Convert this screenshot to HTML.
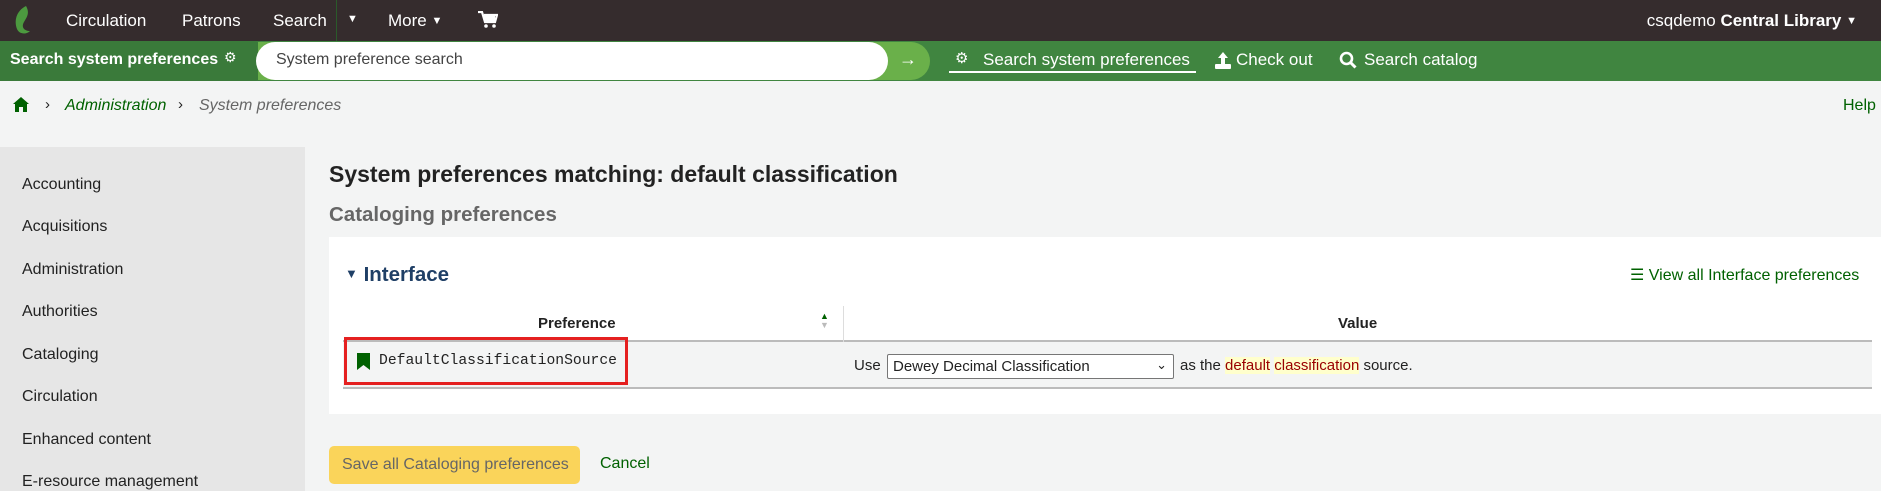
<!DOCTYPE html>
<html><head><meta charset="utf-8"><style>
*{margin:0;padding:0;box-sizing:border-box}
body{width:1881px;height:491px;overflow:hidden;background:#f3f4f4;font-family:"Liberation Sans",sans-serif;font-size:16px;color:#222;position:relative}
.a{position:absolute;white-space:nowrap}
#top{left:0;top:0;width:1881px;height:41px;background:#352c2d}
#top .a{color:#fff;font-size:17px;top:11px}
#gbar{left:0;top:41px;width:1881px;height:40px;background:#408540}
#gbar .a{color:#fff;font-size:17px}
.side{left:0;top:147px;width:305px;height:344px;background:#e6e6e6}
.side div{position:absolute;left:22px;font-size:16px;color:#222}
.hl{background:#ffffcc;color:#990000}
</style></head><body>
<div class="a" id="top">
 <svg class="a" style="left:12px;top:5px" width="22" height="30" viewBox="0 0 22 30"><path d="M14 1 C4 6 2 16 5 24 C7 29 14 30 18 26 C12 26 9 22 12 17 C15 12 18 8 14 1Z" fill="#4c9a3f"/></svg>
 <div class="a" style="left:66px">Circulation</div>
 <div class="a" style="left:182px">Patrons</div>
 <div class="a" style="left:273px">Search</div>
 <div class="a" style="left:336px;top:0;width:1px;height:41px;background:#2a5a2a"></div>
 <div class="a" style="left:347px;top:13px;font-size:11px">▼</div>
 <div class="a" style="left:388px">More <span style="font-size:11px;vertical-align:2px">▼</span></div>
 <svg class="a" style="left:478px;top:11px" width="20" height="18" viewBox="0 0 20 18"><path d="M0 1h4l3 10h10l2-7H6" fill="none" stroke="#fff" stroke-width="2.2"/><rect x="6" y="5" width="11" height="5" fill="#fff"/><circle cx="8" cy="15" r="1.8" fill="#fff"/><circle cx="16" cy="15" r="1.8" fill="#fff"/></svg>
 <div class="a" style="right:24px;left:auto">csqdemo <b>Central Library</b> <span style="font-size:11px;vertical-align:2px">▼</span></div>
</div>
<div class="a" id="gbar">
 <div class="a" style="left:0;top:0;width:275px;height:40px;background:#3a7a3a;border-radius:0 20px 20px 0"></div>
 <div class="a" style="left:10px;top:10px;font-weight:bold;font-size:16px">Search system preferences</div>
 <div class="a" style="left:224px;top:8px;font-size:14px">⚙</div>
 <div class="a" style="left:258px;top:1px;width:672px;height:38px;background:#6ab04a;border-radius:0 20px 20px 0"></div>
 <div class="a" style="left:256px;top:1px;width:632px;height:38px;background:#fff;border-radius:19px"></div>
 <div class="a" style="left:276px;top:10px;color:#444;font-size:16px">System preference search</div>
 <div class="a" style="left:899px;top:8px;font-size:18px;font-weight:bold">→</div>
 <div class="a" style="left:955px;top:8px;font-size:15px">⚙</div>
 <div class="a" style="left:983px;top:9px">Search system preferences</div>
 <div class="a" style="left:949px;top:30px;width:247px;height:2px;background:#fff"></div>
 <svg class="a" style="left:1214px;top:10px" width="18" height="19" viewBox="0 0 18 19"><path d="M9 1l-5 6h3v6h4V7h3z" fill="#fff"/><rect x="1" y="13" width="16" height="5" rx="1" fill="#fff"/></svg>
 <div class="a" style="left:1236px;top:9px">Check out</div>
 <svg class="a" style="left:1339px;top:10px" width="18" height="19" viewBox="0 0 18 19"><circle cx="7.5" cy="7.5" r="5.5" fill="none" stroke="#fff" stroke-width="2.6"/><path d="M11.5 11.5l5 5" stroke="#fff" stroke-width="3"/></svg>
 <div class="a" style="left:1364px;top:9px">Search catalog</div>
</div>
<svg class="a" style="left:13px;top:97px" width="16" height="15" viewBox="0 0 16 15"><path d="M8 0L0 7h2v8h4v-5h4v5h4V7h2z" fill="#006100"/></svg>
<div class="a" style="left:45px;top:96px;font-size:15px">›</div>
<div class="a" style="left:65px;top:97px;font-style:italic;color:#006100;font-size:16px">Administration</div>
<div class="a" style="left:178px;top:96px;font-size:15px">›</div>
<div class="a" style="left:199px;top:97px;font-style:italic;color:#666;font-size:16px">System preferences</div>
<div class="a" style="left:1843px;top:97px;color:#006100;font-size:16px">Help</div>
<div class="a side">
 <div style="top:29px">Accounting</div><div style="top:71px">Acquisitions</div><div style="top:114px">Administration</div><div style="top:156px">Authorities</div><div style="top:199px">Cataloging</div><div style="top:241px">Circulation</div><div style="top:284px">Enhanced content</div><div style="top:326px">E-resource management</div>
</div>
<div class="a" style="left:329px;top:161px;font-size:23px;font-weight:bold;color:#222">System preferences matching: default classification</div>
<div class="a" style="left:329px;top:203px;font-size:20.5px;font-weight:bold;color:#666">Cataloging preferences</div>
<div class="a" style="left:329px;top:237px;width:1552px;height:177px;background:#fff"></div>
<div class="a" style="left:345px;top:263px;font-size:20.5px;font-weight:bold;color:#1f3f66"><span style="font-size:13px;vertical-align:3px">▼</span> Interface</div>
<div class="a" style="left:1630px;top:265px;color:#006100;font-size:16px">☰ View all Interface preferences</div>
<div class="a" style="left:343px;top:306px;width:1529px;height:36px;border-bottom:2px solid #bbb"></div>
<div class="a" style="left:843px;top:306px;width:1px;height:83px;background:#ddd"></div>
<div class="a" style="left:538px;top:315px;font-weight:bold;font-size:15px">Preference</div>
<div class="a" style="left:820px;top:312px;font-size:9px;line-height:9px;color:#006100">▲<br><span style="color:#bbb">▼</span></div>
<div class="a" style="left:1338px;top:315px;font-weight:bold;font-size:15px">Value</div>
<div class="a" style="left:343px;top:342px;width:1529px;height:47px;background:#f3f4f4;border-bottom:2px solid #bbb"></div>
<div class="a" style="left:344px;top:337px;width:284px;height:48px;border:3px solid #e52020"></div>
<svg class="a" style="left:357px;top:353px" width="13" height="17" viewBox="0 0 13 17"><path d="M0 0h13v17l-6.5-5L0 17z" fill="#006100"/></svg>
<div class="a" style="left:379px;top:353px;font-family:'Liberation Mono',monospace;font-size:14.7px">DefaultClassificationSource</div>
<div class="a" style="left:854px;top:357px;font-size:15px">Use</div>
<div class="a" style="left:887px;top:354px;width:287px;height:25px;border:1px solid #767676;border-radius:2px;background:#fff;font-size:15px;padding:3px 5px">Dewey Decimal Classification<span style="position:absolute;right:6px;top:2px;font-size:13px">⌄</span></div>
<div class="a" style="left:1180px;top:357px;font-size:15px">as the <span class="hl">default</span> <span class="hl">classification</span> source.</div>
<div class="a" style="left:329px;top:446px;width:251px;height:38px;background:#fad45a;border-radius:5px;color:#666;font-size:16px;padding:10px 0 0 13px">Save all Cataloging preferences</div>
<div class="a" style="left:600px;top:455px;color:#006100;font-size:16px">Cancel</div>
</body></html>
